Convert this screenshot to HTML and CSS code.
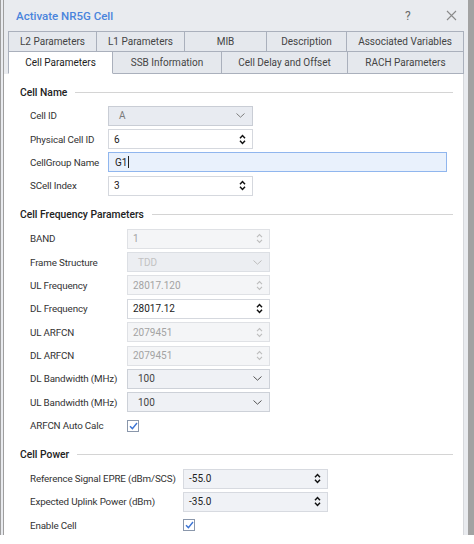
FILE: index.html
```html
<!DOCTYPE html>
<html lang="en">
<head>
  <meta charset="UTF-8">
  <title>Activate NR5G Cell</title>
  <link rel="stylesheet" href="styles.css">
</head>
<body>

<div class="window">
  <div class="titlebar">
    <span class="title">Activate NR5G Cell</span>
    <span class="help">?</span>
    <span class="close">
      <svg width="11" height="11" viewBox="0 0 11 11"><path d="M1 1 L10 10 M10 1 L1 10" stroke="#8a8a8a" stroke-width="1.1" fill="none"/></svg>
    </span>
  </div>

  <div class="tabs">
    <div class="tab-row row-one">
      <div class="tab">L2 Parameters</div>
      <div class="tab">L1 Parameters</div>
      <div class="tab">MIB</div>
      <div class="tab">Description</div>
      <div class="tab">Associated Variables</div>
    </div>
    <div class="tab-row row-two">
      <div class="tab active">Cell Parameters</div>
      <div class="tab">SSB Information</div>
      <div class="tab">Cell Delay and Offset</div>
      <div class="tab">RACH Parameters</div>
    </div>
  </div>

  <div class="pane">
    <!-- Cell Name -->
    <div class="group name-group">
      <div class="group-title"><span>Cell Name</span></div>
      <div class="rows">
        <div class="row">
          <div class="label">Cell ID</div>
          <div class="field combo">
            <span class="value">A</span>
            <svg class="chev" width="9" height="5" viewBox="0 0 9 5"><path d="M0.5 0.5 L4.5 4.2 L8.5 0.5" stroke="#7d7d7d" stroke-width="1" fill="none"/></svg>
          </div>
        </div>
        <div class="row">
          <div class="label">Physical Cell ID</div>
          <div class="field spin">
            <span class="value">6</span>
            <svg class="arrows" width="7" height="11" viewBox="0 0 7 11"><path d="M1 4.2 L3.5 1.6 L6 4.2 M1 6.8 L3.5 9.4 L6 6.8" stroke="#111" stroke-width="1.5" fill="none"/></svg>
          </div>
        </div>
        <div class="row">
          <div class="label">CellGroup Name</div>
          <div class="field edit focus"><span class="value">G1</span><span class="caret"></span></div>
        </div>
        <div class="row">
          <div class="label">SCell Index</div>
          <div class="field spin">
            <span class="value">3</span>
            <svg class="arrows" width="7" height="11" viewBox="0 0 7 11"><path d="M1 4.2 L3.5 1.6 L6 4.2 M1 6.8 L3.5 9.4 L6 6.8" stroke="#111" stroke-width="1.5" fill="none"/></svg>
          </div>
        </div>
      </div>
    </div>

    <!-- Cell Frequency Parameters -->
    <div class="group freq-group">
      <div class="group-title"><span>Cell Frequency Parameters</span></div>
      <div class="rows">
        <div class="row">
          <div class="label">BAND</div>
          <div class="field spin disabled">
            <span class="value">1</span>
            <svg class="arrows" width="7" height="11" viewBox="0 0 7 11"><path d="M1 4.2 L3.5 1.6 L6 4.2 M1 6.8 L3.5 9.4 L6 6.8" stroke="#bdbdbd" stroke-width="1.1" fill="none"/></svg>
          </div>
        </div>
        <div class="row">
          <div class="label">Frame Structure</div>
          <div class="field combo disabled">
            <span class="value">TDD</span>
            <svg class="chev" width="9" height="5" viewBox="0 0 9 5"><path d="M0.5 0.5 L4.5 4.2 L8.5 0.5" stroke="#bdbdbd" stroke-width="1" fill="none"/></svg>
          </div>
        </div>
        <div class="row">
          <div class="label">UL Frequency</div>
          <div class="field spin disabled">
            <span class="value">28017.120</span>
            <svg class="arrows" width="7" height="11" viewBox="0 0 7 11"><path d="M1 4.2 L3.5 1.6 L6 4.2 M1 6.8 L3.5 9.4 L6 6.8" stroke="#bdbdbd" stroke-width="1.1" fill="none"/></svg>
          </div>
        </div>
        <div class="row">
          <div class="label">DL Frequency</div>
          <div class="field spin">
            <span class="value">28017.12</span>
            <svg class="arrows" width="7" height="11" viewBox="0 0 7 11"><path d="M1 4.2 L3.5 1.6 L6 4.2 M1 6.8 L3.5 9.4 L6 6.8" stroke="#111" stroke-width="1.5" fill="none"/></svg>
          </div>
        </div>
        <div class="row">
          <div class="label">UL ARFCN</div>
          <div class="field spin disabled">
            <span class="value">2079451</span>
            <svg class="arrows" width="7" height="11" viewBox="0 0 7 11"><path d="M1 4.2 L3.5 1.6 L6 4.2 M1 6.8 L3.5 9.4 L6 6.8" stroke="#bdbdbd" stroke-width="1.1" fill="none"/></svg>
          </div>
        </div>
        <div class="row">
          <div class="label">DL ARFCN</div>
          <div class="field spin disabled">
            <span class="value">2079451</span>
            <svg class="arrows" width="7" height="11" viewBox="0 0 7 11"><path d="M1 4.2 L3.5 1.6 L6 4.2 M1 6.8 L3.5 9.4 L6 6.8" stroke="#bdbdbd" stroke-width="1.1" fill="none"/></svg>
          </div>
        </div>
        <div class="row">
          <div class="label">DL Bandwidth (MHz)</div>
          <div class="field combo open">
            <span class="value">100</span>
            <svg class="chev" width="9" height="5" viewBox="0 0 9 5"><path d="M0.5 0.5 L4.5 4.2 L8.5 0.5" stroke="#555" stroke-width="1" fill="none"/></svg>
          </div>
        </div>
        <div class="row">
          <div class="label">UL Bandwidth (MHz)</div>
          <div class="field combo open">
            <span class="value">100</span>
            <svg class="chev" width="9" height="5" viewBox="0 0 9 5"><path d="M0.5 0.5 L4.5 4.2 L8.5 0.5" stroke="#555" stroke-width="1" fill="none"/></svg>
          </div>
        </div>
        <div class="row">
          <div class="label">ARFCN Auto Calc</div>
          <div class="check">
            <svg width="9" height="8" viewBox="0 0 9 8"><path d="M1 4.2 L3.4 6.6 L8 1" stroke="#3c74d4" stroke-width="1.4" fill="none"/></svg>
          </div>
        </div>
      </div>
    </div>

    <!-- Cell Power -->
    <div class="group power-group">
      <div class="group-title"><span>Cell Power</span></div>
      <div class="rows">
        <div class="row">
          <div class="label">Reference Signal EPRE (dBm/SCS)</div>
          <div class="field spin soft">
            <span class="value">-55.0</span>
            <svg class="arrows" width="7" height="11" viewBox="0 0 7 11"><path d="M1 4.2 L3.5 1.6 L6 4.2 M1 6.8 L3.5 9.4 L6 6.8" stroke="#111" stroke-width="1.5" fill="none"/></svg>
          </div>
        </div>
        <div class="row">
          <div class="label">Expected Uplink Power (dBm)</div>
          <div class="field spin soft">
            <span class="value">-35.0</span>
            <svg class="arrows" width="7" height="11" viewBox="0 0 7 11"><path d="M1 4.2 L3.5 1.6 L6 4.2 M1 6.8 L3.5 9.4 L6 6.8" stroke="#111" stroke-width="1.5" fill="none"/></svg>
          </div>
        </div>
        <div class="row">
          <div class="label">Enable Cell</div>
          <div class="check">
            <svg width="9" height="8" viewBox="0 0 9 8"><path d="M1 4.2 L3.4 6.6 L8 1" stroke="#3c74d4" stroke-width="1.4" fill="none"/></svg>
          </div>
        </div>
      </div>
    </div>
  </div>
</div>

</body>
</html>
```

FILE: styles.css
```css
body {
  margin: 0;
  background: #ffffff;
  font-family: Roboto, "Liberation Sans", sans-serif;
  color: #2a2a2a;
}

.window {
  width: 474px;
  height: 535px;
  box-sizing: border-box;
  border-left: 4px double #9e9e9e;
  border-right: 6px solid #a2a2a2;
  background: #e9ebef;
  display: flex;
  flex-direction: column;
}

/* title bar */
.titlebar {
  height: 31px;
  display: flex;
  align-items: center;
  padding: 0 0 0 12px;
  flex-shrink: 0;
}

.title {
  font-size: 11.5px;
  font-weight: 500;
  color: #4a84dc;
  flex: 1;
}

.help {
  font-size: 12px;
  color: #6a6a6a;
  width: 12px;
  margin-right: 29px;
}

.close {
  display: flex;
  margin-right: 11px;
}

/* tabs */
.tabs {
  margin: 0 4px;
  flex-shrink: 0;
}

.tab-row {
  display: grid;
}

.row-one {
  grid-template-columns: 89px 88px 82px 80px 1fr;
  height: 19px;
  border-top: 1px solid #aab0bc;
}

.row-two {
  grid-template-columns: 105px 109px 126px 1fr;
  height: 22px;
  border-top: 1px solid #aab0bc;
}

.tab {
  display: flex;
  align-items: center;
  justify-content: center;
  font-size: 10px;
  color: #444;
  background: #e5e8ed;
  border-right: 1px solid #aab0bc;
}

.tab:first-child {
  border-left: 1px solid #aab0bc;
}

.row-two .tab {
  border-bottom: 1px solid #aab0bc;
}

.row-two .tab.active {
  background: #ffffff;
  border-bottom-color: #ffffff;
  color: #222;
}

/* page */
.pane {
  flex: 1;
  background: #ffffff;
  margin-right: 4px;
  border-right: 1px solid #d6d8dc;
  padding-left: 16px;
  overflow: hidden;
}

.group-title {
  height: 20px;
  display: flex;
  align-items: center;
  margin-top: 7.4px;
  margin-right: 10px;
  font-size: 10.3px;
  font-weight: 500;
  color: #222;
}

.name-group .group-title {
  margin-top: 8px;
}

.group-title::after {
  content: "";
  flex: 1;
  height: 1px;
  background: #d4d4d4;
  margin-left: 8px;
}

.rows {
  padding-top: 2px;
  padding-left: 10px;
}

.row {
  height: 23.4px;
  display: flex;
  align-items: center;
}

.label {
  font-size: 9.8px;
  letter-spacing: -0.15px;
  color: #333;
  white-space: nowrap;
  flex-shrink: 0;
}

.name-group .label {
  width: 78px;
}

.freq-group .label {
  width: 97px;
}

.power-group .label {
  width: 153px;
}

/* inputs */
.field {
  height: 20px;
  box-sizing: border-box;
  border: 1px solid #d5d8de;
  display: flex;
  align-items: center;
  justify-content: space-between;
  padding: 0 6px 0 5px;
  font-size: 10px;
  background: #ffffff;
  color: #222;
}

.name-group .field {
  width: 145px;
}

.freq-group .field {
  width: 143px;
}

.power-group .field {
  width: 145px;
}

.name-group .field.edit {
  width: 339px;
  justify-content: flex-start;
}

.spin.disabled {
  background: #f4f5f7;
  border-color: #dfe1e5;
  color: #a3a3a3;
}

.spin.soft {
  background: #f0f2f6;
  border-color: #d7dae0;
}

.combo {
  background: #e8ebf1;
  border-color: #c9cdd5;
  color: #7a7a7a;
  padding: 0 7px 0 10px;
}

.combo.disabled {
  background: #eceef2;
  border-color: #dcdfe4;
  color: #c2c2c2;
}

.combo.open {
  background: #eff1f5;
  border-color: #cdd1d8;
  color: #444;
}

.edit.focus {
  background: #e9f1fc;
  border-color: #90b6ee;
  padding-left: 6px;
}

.caret {
  width: 1px;
  height: 12px;
  background: #222;
  margin-left: 1px;
}

.check {
  width: 12px;
  height: 12px;
  box-sizing: border-box;
  border: 1px solid #8a97ab;
  background: #ffffff;
  display: flex;
  align-items: center;
  justify-content: center;
}
```
